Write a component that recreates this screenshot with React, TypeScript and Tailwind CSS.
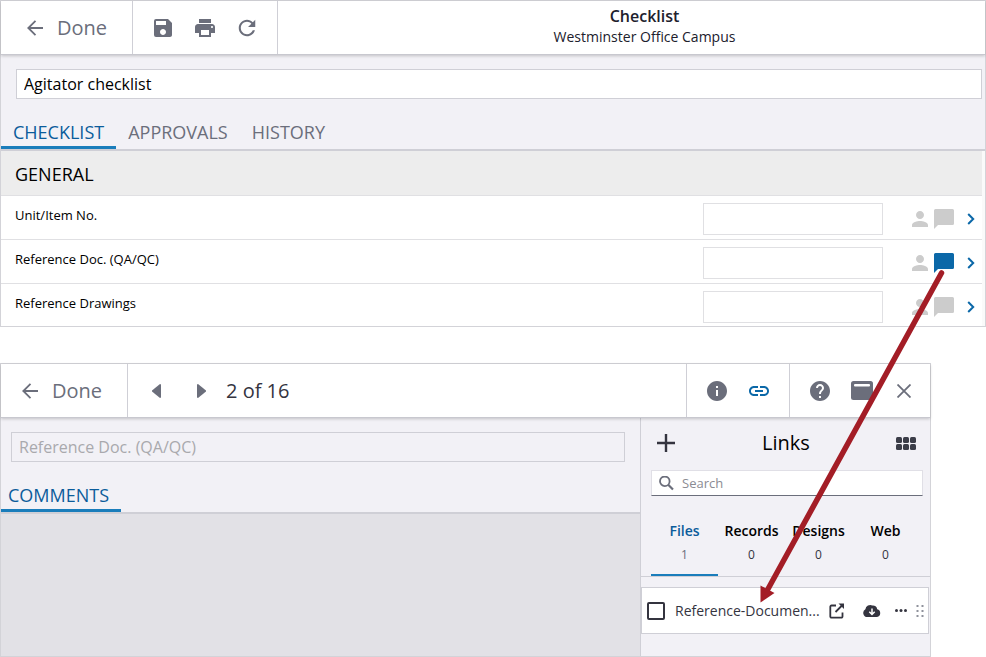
import type { ReactNode } from 'react'
import { MdHelp, MdInfo, MdLink, MdPerson, MdPrint, MdSave } from 'react-icons/md'
import { IoMdRefresh } from 'react-icons/io'

type ChecklistItem = {
  id: string
  label: string
  hasComment: boolean
}

type LinkTab = {
  name: string
  count: number
}

const items: ChecklistItem[] = [
  { id: 'unit', label: 'Unit/Item No.', hasComment: false },
  { id: 'ref-doc', label: 'Reference Doc. (QA/QC)', hasComment: true },
  { id: 'ref-drawings', label: 'Reference Drawings', hasComment: false },
]

const tabs = ['CHECKLIST', 'APPROVALS', 'HISTORY']

const linkTabs: LinkTab[] = [
  { name: 'Files', count: 1 },
  { name: 'Records', count: 0 },
  { name: 'Designs', count: 0 },
  { name: 'Web', count: 0 },
]

function IconButton({ label, children }: { label: string; children: ReactNode }) {
  return (
    <button type="button" aria-label={label} className="flex h-6 w-6 shrink-0 items-center justify-center">
      {children}
    </button>
  )
}

function DoneButton() {
  return (
    <button type="button" className="flex items-center gap-3.5 text-xl text-[#6b6e7b]">
      <svg width="16" height="16" viewBox="0 0 16 16" fill="none" stroke="currentColor" strokeWidth="1.8" aria-hidden="true">
        <path d="M16 8H1.5M8.5 0.8L1.3 8l7.2 7.2" />
      </svg>
      Done
    </button>
  )
}

function ChecklistRow({ item }: { item: ChecklistItem }) {
  return (
    <li className="flex h-11 items-start border-b border-[#e0e0e3] pl-3.5 last:h-[42px] last:border-b-0">
      <label htmlFor={item.id} className="flex-1 pt-[9px] text-[13px] leading-5 text-black">{item.label}</label>
      <input id={item.id} type="text" className="mt-[7px] h-8 w-[180px] border border-[#e0e0e3] bg-white px-2 text-[13px]" />
      <div className="mt-[11px] ml-[25px] flex items-center">
        <IconButton label="Assign person">
          <MdPerson size={24} className="text-[#cccccc]" />
        </IconButton>
        <IconButton label="Comments">
          <svg width="20" height="20" viewBox="0 0 20 20" className={item.hasComment ? 'text-[#0b68a8]' : 'text-[#cccccc]'} aria-hidden="true">
            <path d="M1.5 0h17A1.5 1.5 0 0 1 20 1.5v13a1.5 1.5 0 0 1-1.5 1.5H4l-4 4V1.5A1.5 1.5 0 0 1 1.5 0z" fill="currentColor" />
          </svg>
        </IconButton>
        <button type="button" aria-label="Open item" className="ml-1 flex h-6 w-[22px] items-center justify-center">
          <svg width="8" height="12" viewBox="0 0 8 12" fill="none" stroke="#0b68a8" strokeWidth="2" aria-hidden="true">
            <path d="M1.2 1l5 5-5 5" />
          </svg>
        </button>
      </div>
    </li>
  )
}

function ChecklistPanel() {
  return (
    <section className="border border-[#d3d3d8] bg-[#f2f1f6]">
      {/* --- Header --- */}
      <header className="relative flex h-[54px] border-b border-[#c8c8cf] bg-white shadow-[0_1px_3px_rgba(0,0,0,0.2)]">
        <div className="flex w-[132px] items-center border-r border-[#cfcfd6] pl-[26px]">
          <DoneButton />
        </div>
        <div className="flex w-[145px] items-center gap-[18px] border-r border-[#cfcfd6] pl-[18px] text-[#6b6e7b]">
          <IconButton label="Save"><MdSave size={24} /></IconButton>
          <IconButton label="Print"><MdPrint size={24} /></IconButton>
          <IconButton label="Refresh"><IoMdRefresh size={24} /></IconButton>
        </div>
        <div className="flex-1 pt-1 pl-[26px] text-center text-[#20202c]">
          <h1 className="text-base leading-[22px] font-semibold">Checklist</h1>
          <p className="text-sm leading-5">Westminster Office Campus</p>
        </div>
      </header>

      {/* --- Checklist name --- */}
      <div className="pt-3.5 pr-[3px] pl-[15px]">
        <input type="text" aria-label="Checklist name" defaultValue="Agitator checklist" className="block h-[30px] w-full border border-[#cfcfd6] bg-white px-[7px] text-base text-black" />
      </div>

      {/* --- Tabs --- */}
      <nav className="mt-[19px] flex border-b-2 border-[#cfcfd6]">
        {tabs.map((tab, i) => (
          <a
            key={tab}
            href="#"
            className={
              i === 0
                ? 'border-b-3 border-[#1a7dbb] px-3 text-lg leading-7 text-[#0b5c9b]'
                : 'border-b-3 border-transparent px-3 text-lg leading-7 text-[#6b6e7b]'
            }
          >
            {tab}
          </a>
        ))}
      </nav>

      {/* --- Items --- */}
      <div className="bg-[#fafafa] pr-[3px]">
        <h2 className="h-[45px] border-b border-[#e0e0e3] bg-[#ededed] pl-3.5 text-lg leading-[46px] text-black">GENERAL</h2>
        <ul className="bg-white">
          {items.map((item) => (
            <ChecklistRow key={item.id} item={item} />
          ))}
        </ul>
      </div>
    </section>
  )
}

function LinksSidebar() {
  return (
    <aside className="w-[290px] shrink-0 border-l border-[#cfcfd6] pb-[22px]">
      <div className="mb-0.5 flex h-[50px] items-center justify-between pr-3 pl-[13px]">
        <IconButton label="Add link">
          <svg width="18" height="18" viewBox="0 0 18 18" stroke="#34343f" strokeWidth="2.4" aria-hidden="true">
            <path d="M9 0v18M0 9h18" />
          </svg>
        </IconButton>
        <h2 className="text-xl text-black">Links</h2>
        <IconButton label="Grid view">
          <svg width="20" height="13" viewBox="0 0 20 13" fill="#3b3d48" aria-hidden="true">
            <rect width="6" height="6" rx="1.5" />
            <rect x="7" width="6" height="6" rx="1.5" />
            <rect x="14" width="6" height="6" rx="1.5" />
            <rect y="7" width="6" height="6" rx="1.5" />
            <rect x="7" y="7" width="6" height="6" rx="1.5" />
            <rect x="14" y="7" width="6" height="6" rx="1.5" />
          </svg>
        </IconButton>
      </div>

      {/* --- Search --- */}
      <div className="mr-[7px] ml-2.5 flex h-[26px] items-center gap-2 border border-[#e0dfe6] border-b-[#6b6e7b] bg-white pl-[7px]">
        <svg width="15" height="15" viewBox="0 0 15 15" fill="none" stroke="#6b6e7b" strokeWidth="1.8" aria-hidden="true">
          <circle cx="5.8" cy="5.3" r="4.8" />
          <path d="M9.2 8.7l4.8 4.8" strokeWidth="2.2" />
        </svg>
        <input type="search" aria-label="Search links" placeholder="Search" className="w-full min-w-0 flex-1 bg-transparent text-[13px] leading-5 outline-none placeholder:text-[#8b8b93]" />
      </div>

      {/* --- Link types --- */}
      <div className="flex border-b border-[#cfcfd6] px-2.5 pt-[23px]">
        {linkTabs.map((tab, i) => (
          <a
            key={tab.name}
            href="#"
            className={
              i === 0
                ? 'w-[67px] border-b-2 border-[#1a7dbb] pb-[7px] text-center text-[#0b5c9b]'
                : 'w-[67px] border-b-2 border-transparent pb-[7px] text-center text-black'
            }
          >
            <span className="block text-sm leading-6 font-semibold">{tab.name}</span>
            <span className={i === 0 ? 'block text-xs leading-6 text-[#6b6e7b]' : 'block text-xs leading-6 text-[#34343f]'}>{tab.count}</span>
          </a>
        ))}
      </div>

      {/* --- File --- */}
      <div className="mt-2.5 mr-px flex h-[47px] items-center border border-[#cfcfd6] bg-white pr-1 pl-[5px] text-[#34343f]">
        <input id="file-1" type="checkbox" className="h-[18px] w-[18px] shrink-0 appearance-none rounded-xs border-2 border-[#34343f] bg-white" />
        <label htmlFor="file-1" className="ml-2.5 flex-1 text-sm whitespace-nowrap">Reference-Documen...</label>
        <div className="flex items-center">
          <IconButton label="Open file">
            <svg width="16" height="16" viewBox="0 0 16 16" fill="none" stroke="currentColor" strokeWidth="1.8" aria-hidden="true">
              <path d="M7 2.5H2.5A1.2 1.2 0 0 0 1.3 3.7v9.8a1.2 1.2 0 0 0 1.2 1.2h9.8a1.2 1.2 0 0 0 1.2-1.2V9.5M6.5 9l6.5-6.5" />
              <path d="M9.5 0.5H15v5.5z" fill="currentColor" stroke="none" />
            </svg>
          </IconButton>
          <div className="mr-[5px] ml-[11px] flex">
            <IconButton label="Download file">
              <svg width="18" height="14" viewBox="0 0 18 14" aria-hidden="true">
                <path d="M4.3 13A4.1 4.1 0 0 1 2.4 5.3 4.9 4.9 0 0 1 9.4 1.5a4.2 4.2 0 0 1 4.8 3.7A4 4 0 0 1 14 13z" fill="currentColor" />
                <path d="M9 4.5v5.5M6.3 7.8L9 10.5l2.7-2.7" fill="none" stroke="#fff" strokeWidth="1.5" />
              </svg>
            </IconButton>
          </div>
          <IconButton label="More actions">
            <svg width="12" height="3" viewBox="0 0 12 3" fill="currentColor" aria-hidden="true">
              <circle cx="1.5" cy="1.5" r="1.5" />
              <circle cx="6" cy="1.5" r="1.5" />
              <circle cx="10.5" cy="1.5" r="1.5" />
            </svg>
          </IconButton>
          <svg width="8" height="12" viewBox="0 0 8 12" fill="#8f929c" className="ml-[3px]" aria-hidden="true">
            <path d="M0.500 0h2v2h-2zM5.500 0h2v2h-2zM0.500 5h2v2h-2zM5.500 5h2v2h-2zM0.500 10h2v2h-2zM5.500 10h2v2h-2z" />
          </svg>
        </div>
      </div>
    </aside>
  )
}

function ItemPanel() {
  return (
    <section className="mt-9 mr-[55px] border border-[#d3d3d8] bg-[#f2f1f6]">
      {/* --- Header --- */}
      <header className="relative flex h-[54px] border-b border-[#c8c8cf] bg-white shadow-[0_1px_3px_rgba(0,0,0,0.2)]">
        <div className="flex w-[127px] items-center border-r border-[#cfcfd6] pl-[21px]">
          <DoneButton />
        </div>
        <div className="flex flex-1 items-center pl-4 text-[#6b6e7b]">
          <IconButton label="Previous item">
            <svg width="9" height="14" viewBox="0 0 9 14" fill="currentColor" aria-hidden="true">
              <path d="M9 1v12q0 1-1 1L0 7.5v-1L8 0q1 0 1 1z" />
            </svg>
          </IconButton>
          <div className="mr-[13px] ml-[21px] flex">
            <IconButton label="Next item">
              <svg width="9" height="14" viewBox="0 0 9 14" fill="currentColor" aria-hidden="true">
                <path d="M0 1v12q0 1 1 1l8-6.5v-1L1 0Q0 0 0 1z" />
              </svg>
            </IconButton>
          </div>
          <span className="text-xl text-[#34343f]">2 of 16</span>
        </div>
        <div className="flex w-[103px] items-center gap-[18px] border-l border-[#cfcfd6] pl-[18px] text-[#6b6e7b]">
          <IconButton label="Information"><MdInfo size={24} /></IconButton>
          <IconButton label="Links"><MdLink size={24} className="text-[#0b68a8]" /></IconButton>
        </div>
        <div className="flex w-[141px] items-center gap-[18px] border-l border-[#cfcfd6] pl-[18px] text-[#6b6e7b]">
          <IconButton label="Help"><MdHelp size={24} /></IconButton>
          <IconButton label="Window">
            <svg width="22" height="19" viewBox="0 0 22 19" aria-hidden="true">
              <rect width="22" height="19" rx="2.5" fill="currentColor" />
              <rect x="3" y="3" width="16" height="2.5" rx="1" fill="#fff" />
            </svg>
          </IconButton>
          <IconButton label="Close">
            <svg width="14" height="14" viewBox="0 0 14 14" stroke="currentColor" strokeWidth="1.8" aria-hidden="true">
              <path d="M0.5 0.5l13 13M13.5 0.5l-13 13" />
            </svg>
          </IconButton>
        </div>
      </header>

      <div className="flex">
        <div className="flex flex-1 flex-col">
          <div className="pt-3.5 pr-[15px] pl-2.5">
            <input type="text" aria-label="Item name" defaultValue="Reference Doc. (QA/QC)" readOnly className="block h-[30px] w-full border border-[#cfcfd6] bg-transparent px-[7px] text-base text-[#a9a9ad]" />
          </div>
          <nav className="mt-[19px] flex border-b-2 border-[#cfcfd6]">
            <a href="#" className="border-b-3 border-[#1a7dbb] pr-3 pl-[7px] text-lg leading-7 text-[#0b5c9b]">COMMENTS</a>
          </nav>
          <div className="flex-1 bg-[#e2e1e6]" />
        </div>
        <LinksSidebar />
      </div>
    </section>
  )
}

export default function App() {
  return (
    <main className="relative overflow-hidden bg-white font-['Open_Sans',sans-serif]">
      <ChecklistPanel />
      <ItemPanel />
      {/* Arrow from the comment icon to the linked file */}
      <svg width="190" height="340" viewBox="0 0 190 340" className="pointer-events-none absolute top-[266px] right-[38px]" aria-hidden="true">
        <path d="M183.5 7L10 323" fill="none" stroke="#a31d26" strokeWidth="5.5" strokeLinecap="round" />
        <path d="M2.5 336.500V319.500L16.500 327z" fill="#a31d26" />
      </svg>
    </main>
  )
}
